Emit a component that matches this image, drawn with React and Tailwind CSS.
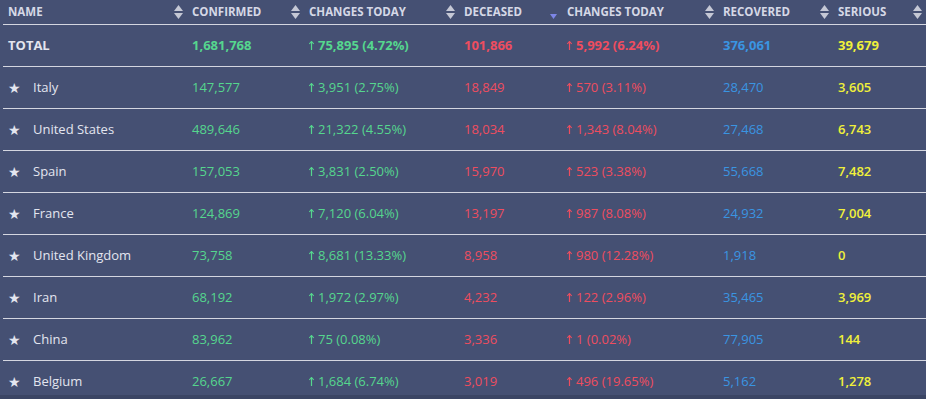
import React from "react";

const cols = "grid grid-cols-[184px_117px_155px_103px_156px_115px_93px]";

const rows = [
    ["Italy", "147,577", "3,951 (2.75%)", "18,849", "570 (3.11%)", "28,470", "3,605"],
    ["United States", "489,646", "21,322 (4.55%)", "18,034", "1,343 (8.04%)", "27,468", "6,743"],
    ["Spain", "157,053", "3,831 (2.50%)", "15,970", "523 (3.38%)", "55,668", "7,482"],
    ["France", "124,869", "7,120 (6.04%)", "13,197", "987 (8.08%)", "24,932", "7,004"],
    ["United Kingdom", "73,758", "8,681 (13.33%)", "8,958", "980 (12.28%)", "1,918", "0"],
    ["Iran", "68,192", "1,972 (2.97%)", "4,232", "122 (2.96%)", "35,465", "3,969"],
    ["China", "83,962", "75 (0.08%)", "3,336", "1 (0.02%)", "77,905", "144"],
    ["Belgium", "26,667", "1,684 (6.74%)", "3,019", "496 (19.65%)", "5,162", "1,278"],
];

function SortIcon() {
    return (
        <svg width="9" height="14" viewBox="0 0 9 14" className="text-[#c5c8d5] shrink-0">
            <path d="M4.5 0 L9 6 L0 6 Z" fill="currentColor" />
            <path d="M0 8 L9 8 L4.5 14 Z" fill="currentColor" />
        </svg>
    );
}

function SortDown() {
    return (
        <svg width="9" height="14" viewBox="0 0 9 14" className="text-[#7d86e6] shrink-0">
            <path d="M1 9 L8 9 L4.5 14 Z" fill="currentColor" />
        </svg>
    );
}

function Up() {
    // thin up arrow before the change values
    return (
        <svg width="5" height="9" viewBox="0 0 5 9" className="inline-block mr-[4px] -mt-[2px]">
            <path d="M2.5 0.5 L2.5 9" stroke="currentColor" strokeWidth="1.2" />
            <path d="M0.3 3 L2.5 0.5 L4.7 3" stroke="currentColor" strokeWidth="1.1" fill="none" />
        </svg>
    );
}

function Head({ label, active }) {
    return (
        <div className="flex items-center justify-between pl-[5px] pr-[4px]">
            <span>{label}</span>
            {active ? <SortDown /> : <SortIcon />}
        </div>
    );
}

function Cell({ children, className = "" }) {
    return <div className={`pl-[5px] whitespace-nowrap ${className}`}>{children}</div>;
}

export default function App() {
    return (
        <div className="min-h-[399px] bg-[#3b4564] font-['Open_Sans',sans-serif]">
            <div className="h-[395px] overflow-hidden bg-[#455073]">
                <div className={`${cols} ml-[3px] h-[25px] items-center border-b border-[#d4d6e0] text-[11.5px] font-bold uppercase text-[#d5d8e6]`}>
                    <Head label="Name" />
                    <Head label="Confirmed" />
                    <Head label="Changes Today" />
                    <Head label="Deceased" active />
                    <Head label="Changes Today" />
                    <Head label="Recovered" />
                    <Head label="Serious" />
                </div>

                <div className={`${cols} ml-[3px] h-[42px] items-center border-b border-[#d4d6e0] text-[13px] font-bold`}>
                    <Cell className="text-[#e3e5ef]">TOTAL</Cell>
                    <Cell className="text-[#55d68e]">1,681,768</Cell>
                    <Cell className="text-[#55d68e]"><Up />75,895 (4.72%)</Cell>
                    <Cell className="text-[#ee4d5f]">101,866</Cell>
                    <Cell className="text-[#ee4d5f]"><Up />5,992 (6.24%)</Cell>
                    <Cell className="text-[#3a95e2]">376,061</Cell>
                    <Cell className="text-[#f0f03a]">39,679</Cell>
                </div>

                {rows.map((r) => (
                    <div key={r[0]} className={`${cols} ml-[3px] h-[42px] items-center border-b border-[#d4d6e0] text-[13px]`}>
                        <Cell className="text-[#e3e5ef] flex items-center">
                            <span className="w-[25px] text-[14px] leading-none">★</span>
                            {r[0]}
                        </Cell>
                        <Cell className="text-[#55d68e]">{r[1]}</Cell>
                        <Cell className="text-[#55d68e]"><Up />{r[2]}</Cell>
                        <Cell className="text-[#ee4d5f]">{r[3]}</Cell>
                        <Cell className="text-[#ee4d5f]"><Up />{r[4]}</Cell>
                        <Cell className="text-[#3a95e2]">{r[5]}</Cell>
                        <Cell className="text-[#f0f03a] font-semibold">{r[6]}</Cell>
                    </div>
                ))}
            </div>
        </div>
    );
}
